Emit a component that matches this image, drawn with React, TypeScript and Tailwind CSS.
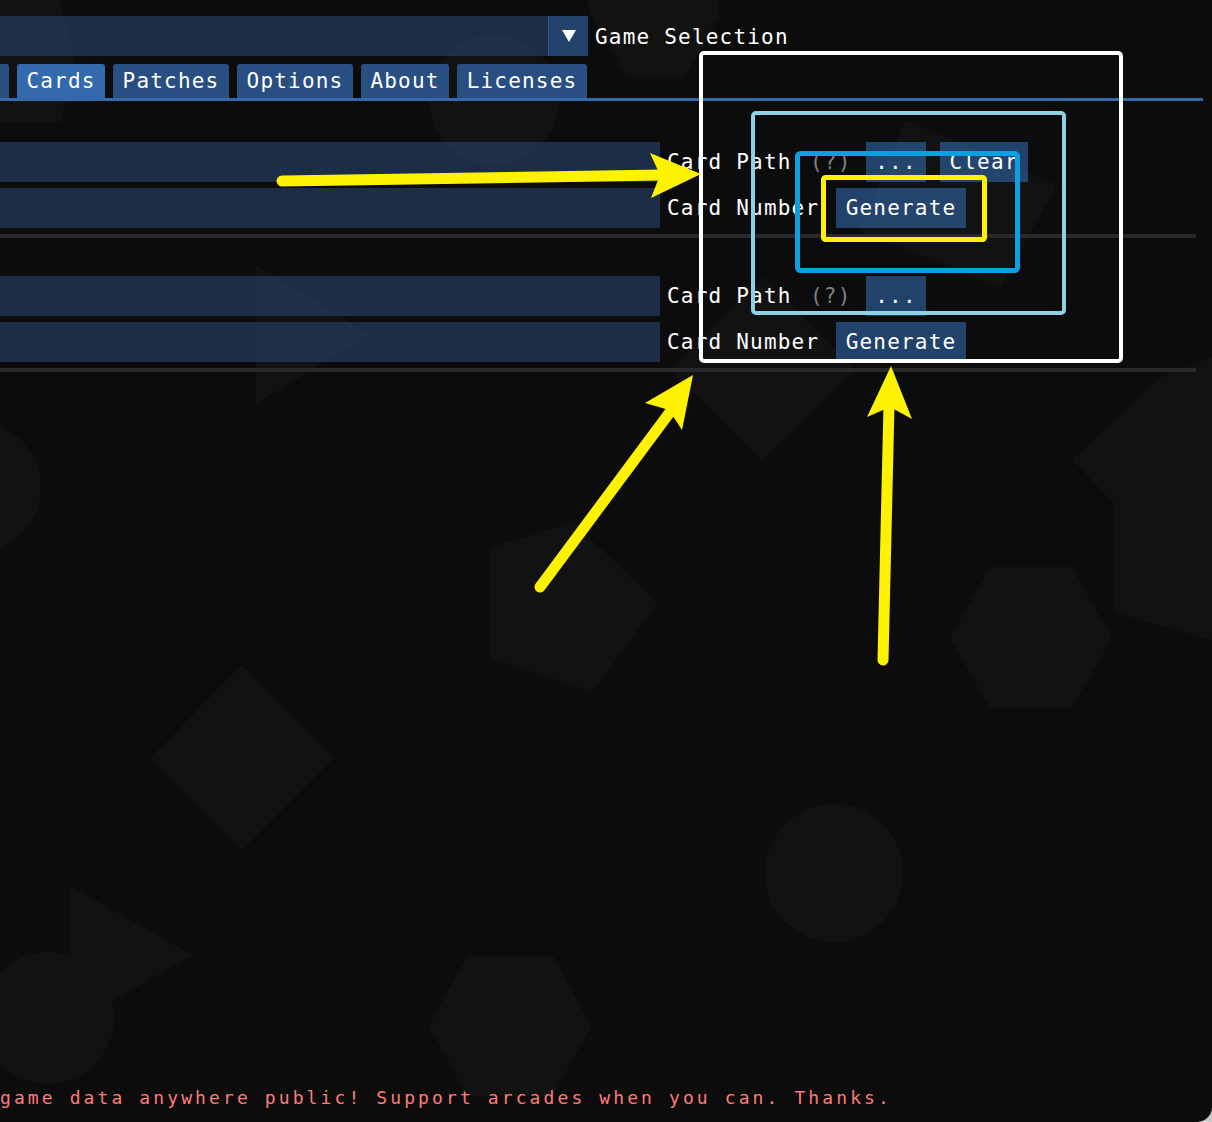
const shapes = [
  "585,-10 714,-10 720,15 685,77 626,77 591,15",
  "-20,0 60,0 75,60 60,122 -20,122",
  "256,265 256,404 370,334",
  "763,277 855,370 762,460 670,370",
  "905,120 1057,185 1000,288 860,230",
  "242,665 334,758 242,850 150,758",
  "490,548 573,522 658,603 592,692 490,658",
  "950,638 990,567 1072,567 1112,638 1072,708 990,708",
  "1072,460 1160,378 1230,350 1230,645 1113,612 1113,502",
  "70,886 193,955 70,1025",
  "429,1026 467,956 553,956 591,1026 553,1096 467,1096",
]

const circles = [
  { cx: 494, cy: 100, r: 65 },
  { cx: -24, cy: 487, r: 65 },
  { cx: 834, cy: 873, r: 69 },
  { cx: 48, cy: 1018, r: 66 },
]

function Backdrop() {
  return (
    <svg className="absolute inset-0" width="1212" height="1122">
      {shapes.map((p) => (
        <polygon key={p} points={p} fill="#121212" />
      ))}
      {circles.map((c) => (
        <circle key={c.cx + "-" + c.cy} cx={c.cx} cy={c.cy} r={c.r} fill="#121212" />
      ))}
    </svg>
  )
}

function Annotations() {
  const y = "#fff200"
  return (
    <svg className="absolute inset-0 pointer-events-none" width="1212" height="1122">
      <rect x="701" y="53" width="420" height="308" rx="3" fill="none" stroke="#ffffff" strokeWidth="4" />
      <rect x="753" y="113" width="311" height="200" rx="3" fill="none" stroke="#8fd0e4" strokeWidth="4" />
      <rect x="797.5" y="153.5" width="220" height="117" rx="3" fill="none" stroke="#0aa0e2" strokeWidth="5" />
      <rect x="823.5" y="177.5" width="161" height="62" rx="2" fill="none" stroke={y} strokeWidth="5" />

      <line x1="282" y1="181" x2="662" y2="175" stroke={y} strokeWidth="11" strokeLinecap="round" />
      <polygon points="701,174 650,153 660,175 651,198" fill={y} />

      <line x1="540" y1="587" x2="676" y2="404" stroke={y} strokeWidth="11" strokeLinecap="round" />
      <polygon points="693,375 645,403 669,410 682,430" fill={y} />

      <line x1="883" y1="660" x2="889" y2="405" stroke={y} strokeWidth="11" strokeLinecap="round" />
      <polygon points="891,366 867,417 890,407 912,419" fill={y} />
    </svg>
  )
}

function Btn({ label, w }: { label: string; w: string }) {
  return (
    <div className={`${w} h-full bg-[#4296fa66] flex items-center justify-center`}>{label}</div>
  )
}

function Tab({ label, w, active }: { label: string; w: string; active?: boolean }) {
  return (
    <div
      className={`${w} h-full rounded-t-[3px] flex items-center justify-center pt-[1px] ${
        active ? "bg-[#3369ad]" : "bg-[#294e81]"
      }`}
    >
      {label}
    </div>
  )
}

function PathRow({ clear }: { clear?: boolean }) {
  return (
    <div className="flex h-[40px] items-center">
      <div className="w-[660px] h-full shrink-0 bg-[#294a7a8a]" />
      <span className="ml-[7px] w-[125px] shrink-0">Card Path</span>
      <span className="ml-[18px] w-[42px] shrink-0 text-[#808080]">(?)</span>
      <div className="ml-[14px] h-full">
        <Btn label="..." w="w-[60px]" />
      </div>
      {clear && (
        <div className="ml-[14px] h-full">
          <Btn label="Clear" w="w-[88px]" />
        </div>
      )}
    </div>
  )
}

function NumberRow() {
  return (
    <div className="flex h-[40px] items-center mt-[6px]">
      <div className="w-[660px] h-full shrink-0 bg-[#294a7a8a]" />
      <span className="ml-[7px] w-[152px] shrink-0">Card Number</span>
      <div className="ml-[17px] h-full">
        <Btn label="Generate" w="w-[130px]" />
      </div>
    </div>
  )
}

export default function App() {
  return (
    <div className="w-[1212px] h-[1122px] bg-[#c9c9c9]">
      <div className="relative w-full h-full overflow-hidden rounded-br-[15px] bg-[#0c0c0c] text-white font-['DejaVu_Sans_Mono',monospace] text-[21px] tracking-[1.2px] leading-none whitespace-nowrap">
        <Backdrop />

        <div className="relative flex flex-col h-full">
          {/* game selection */}
          <div className="mt-[16px] flex h-[40px] items-center">
            <div className="w-[548px] h-full bg-[#294a7a8a]" />
            <div className="w-[40px] h-full bg-[#4296fa66] border-l border-[#2e5487] flex items-center justify-center">
              <svg width="14" height="12" viewBox="0 0 14 12">
                <polygon points="0,0 14,0 7,12" fill="#ffffff" />
              </svg>
            </div>
            <span className="ml-[7px] pt-[2px]">Game Selection</span>
          </div>

          {/* tabs */}
          <div className="mt-[8px] flex h-[34px] gap-[8px]">
            <div className="w-[9px] h-full rounded-tr-[3px] bg-[#294e81]" />
            <Tab label="Cards" w="w-[88px]" active />
            <Tab label="Patches" w="w-[116px]" />
            <Tab label="Options" w="w-[116px]" />
            <Tab label="About" w="w-[88px]" />
            <Tab label="Licenses" w="w-[130px]" />
          </div>
          <div className="h-[3px] w-[1203px] bg-[#3369ad]" />

          {/* card slots */}
          <div className="mt-[41px] w-[1196px]">
            <PathRow clear />
            <NumberRow />
            <div className="mt-[6px] h-[4px] bg-[#28282d]" />
            <div className="mt-[38px]">
              <PathRow />
              <NumberRow />
            </div>
            <div className="mt-[6px] h-[4px] bg-[#28282d]" />
          </div>

          <div className="mt-auto pb-[12px] h-[36px] leading-[24px] text-[18px] tracking-[3.1px] text-[#ff7a7a]">
            game data anywhere public! Support arcades when you can. Thanks.
          </div>
        </div>

        <Annotations />
      </div>
    </div>
  )
}
